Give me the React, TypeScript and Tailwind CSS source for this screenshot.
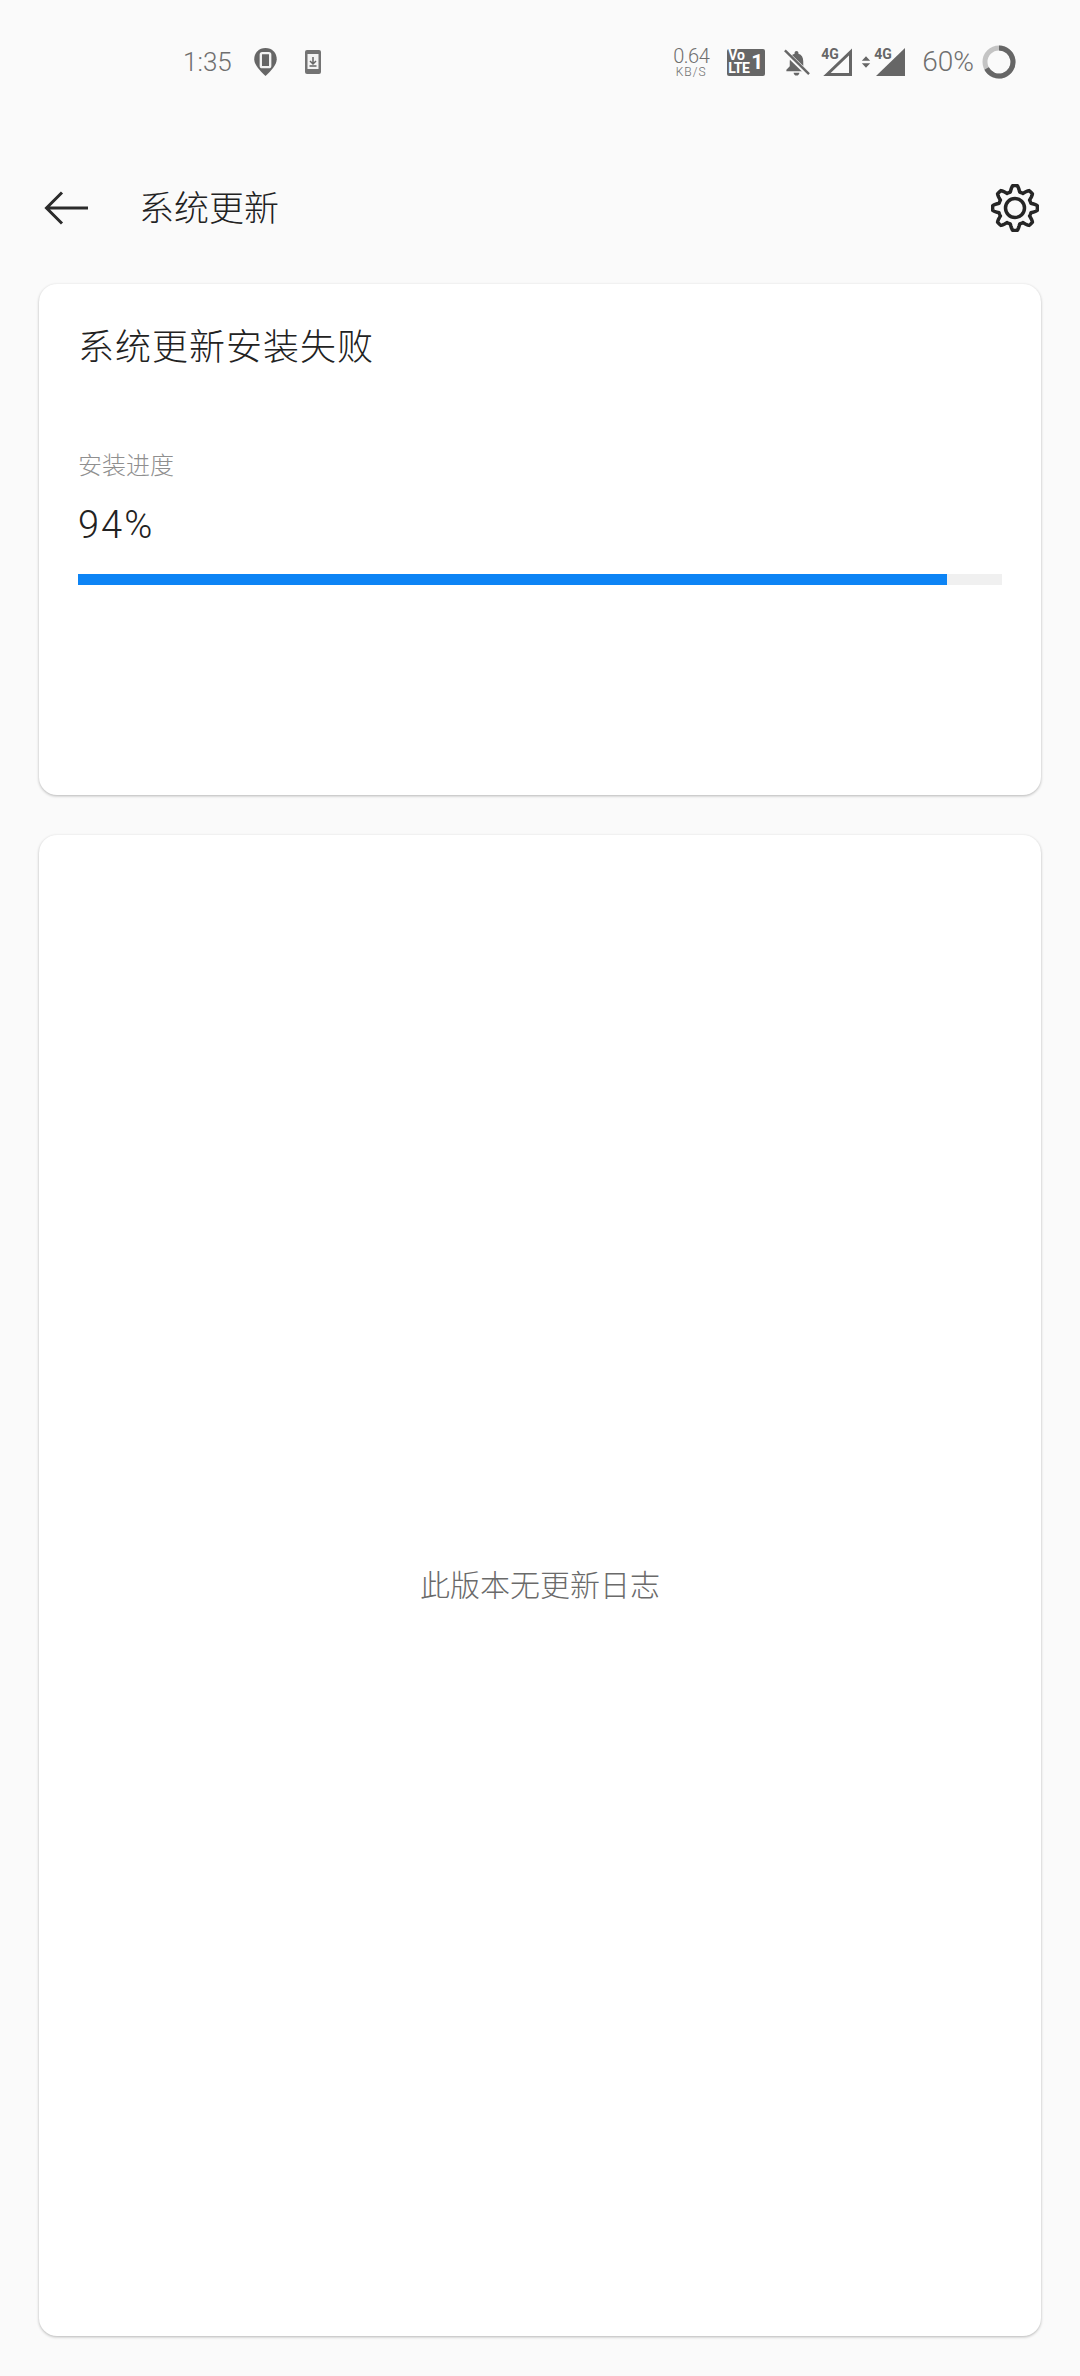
const gearPath = (() => {
  const pts: string[] = [];
  for (let i = 0; i < 240; i++) {
    const t = (i / 240) * Math.PI * 2;
    const wave = Math.max(-1, Math.min(1, 1.5 * Math.cos(8 * t)));
    const r = 19.5 + 2.9 * wave;
    pts.push(`${(24 + r * Math.sin(t)).toFixed(2)} ${(24 - r * Math.cos(t)).toFixed(2)}`);
  }
  return `M${pts.join('L')}Z`;
})();

function PinIcon() {
  return (
    <svg width="25" height="30" viewBox="0 0 26 32">
      <path d="M13 1C6 1 1 6 1 13c0 6 6 12 12 18 6-6 12-12 12-18C25 6 20 1 13 1Z" fill="#666" />
      <rect x="8" y="6.500" width="10" height="15" rx="1.500" fill="none" stroke="#f3f3f3" strokeWidth="2.500" />
    </svg>
  );
}

function PhoneDownIcon() {
  return (
    <svg width="16" height="24" viewBox="0 0 16 24">
      <rect width="16" height="24" rx="2" fill="#737373" />
      <rect x="2.500" y="4" width="11" height="15" fill="#f3f3f3" />
      <path d="M8 7v7M5 11l3 3 3-3M4.500 16h7" fill="none" stroke="#666" strokeWidth="1.500" />
    </svg>
  );
}

function VolteIcon() {
  return (
    <div className="w-[38px] h-[27px] rounded-[2px] bg-[#666] text-white font-bold flex items-center justify-between pl-[1px]" style={{ fontFamily: 'Roboto, sans-serif' }}>
      <div className="flex flex-col">
        <span className="text-[14px] leading-[13px]">Vo</span>
        <span className="text-[14px] leading-[13px] tracking-[-0.5px]">LTE</span>
      </div>
      <span className="text-[21px] leading-none mr-[2px]">1</span>
    </div>
  );
}

function MuteBellIcon() {
  return (
    <svg width="27" height="27" viewBox="0 0 28 28">
      <path d="M14 2c-1.200 0-2 .8-2 2v1C8.500 6 7 9 7 13v5l-3.500 3.500V23h21v-1.500L21 18v-5c0-4-1.500-7-5-8V4c0-1.200-.8-2-2-2Z" fill="#666" />
      <path d="M11 24.500h6c0 1.500-1.300 3-3 3s-3-1.500-3-3Z" fill="#666" />
      <path d="M2 2.500 26 26" stroke="#fafafa" strokeWidth="5" />
      <path d="M2 1.500 27 26" stroke="#666" strokeWidth="2.500" />
    </svg>
  );
}

function SignalIcon({ filled }: { filled: boolean }) {
  return (
    <div className="relative w-[29px] h-[28px]">
      <svg width="29" height="28" viewBox="0 0 29 28" className="absolute left-0 top-0">
        {filled ? (
          <path d="M0 28 29 0v28Z" fill="#666" />
        ) : (
          <path d="M4 26.500 27.500 4v22.500Z" fill="none" stroke="#666" strokeWidth="3" />
        )}
      </svg>
      <span className="absolute left-[-2px] top-[-1px] text-[14px] leading-none font-bold text-[#666]" style={{ fontFamily: 'Roboto, sans-serif' }}>4G</span>
    </div>
  );
}

export default function App() {
  return (
    <div
      className="w-[1080px] h-[2376px] bg-[#fafafa] flex flex-col overflow-hidden"
      style={{ fontFamily: '"Noto Sans CJK SC", Roboto, sans-serif' }}
    >
      {/* status bar */}
      <div className="h-[124px] shrink-0 flex items-center pl-[183px] pr-[64px] text-[#6f6f6f]">
        <span className="text-[26px] font-light" style={{ fontFamily: 'Roboto, sans-serif' }}>1:35</span>
        <div className="ml-[21px]"><PinIcon /></div>
        <div className="ml-[27px]"><PhoneDownIcon /></div>
        <div className="ml-auto flex items-center">
          <div className="flex flex-col items-center mr-[18px]" style={{ fontFamily: 'Roboto, sans-serif' }}>
            <span className="text-[20px] font-light tracking-[-0.5px] leading-[19px]">0.64</span>
            <span className="text-[12px] font-light tracking-[1px] leading-[12px]">KB/S</span>
          </div>
          <VolteIcon />
          <div className="ml-[18px]"><MuteBellIcon /></div>
          <div className="ml-[13px]"><SignalIcon filled={false} /></div>
          <svg width="10" height="14" viewBox="0 0 12 16" className="ml-[9px]">
            <path d="M6 1 11 6.500H1ZM6 15 11 9.500H1Z" fill="#666" />
          </svg>
          <div className="ml-[5px]"><SignalIcon filled /></div>
          <span className="ml-[17px] text-[28px] font-light" style={{ fontFamily: 'Roboto, sans-serif' }}>60%</span>
          <svg width="34" height="34" viewBox="0 0 34 34" className="ml-[8px]">
            <circle cx="17" cy="17" r="14" fill="none" stroke="#c4c4c4" strokeWidth="5" />
            <path d="M17 3a14 14 0 1 1-12.400 20.500" fill="none" stroke="#666" strokeWidth="5" />
          </svg>
        </div>
      </div>

      {/* title bar */}
      <div className="h-[160px] shrink-0 flex items-center pl-[44px] pr-[41px] pt-[8px]">
        <svg width="44" height="34" viewBox="0 0 44 34" fill="none" stroke="#2b2b2b" strokeWidth="3">
          <path d="M44 17H3M18 1.500 2.500 17 18 32.500" />
        </svg>
        <span className="ml-[51px] mb-[6px] text-[35px] font-light text-[#222] leading-none">系统更新</span>
        <svg width="48" height="48" viewBox="0 0 48 48" className="ml-auto" fill="none" stroke="#262626" strokeWidth="3.500">
          <path d={gearPath} strokeLinejoin="round" />
          <circle cx="24" cy="24" r="9.500" />
        </svg>
      </div>

      {/* install status card */}
      <div className="mx-[39px] h-[511px] shrink-0 bg-white rounded-[18px] shadow-[0_1px_3px_rgba(0,0,0,0.28)] px-[39px] pt-[42px]">
        <div className="text-[36px] font-light text-[#222] leading-none tracking-[1px]">系统更新安装失败</div>
        <div className="mt-[90px] text-[24px] font-light text-[#8f8f8f] leading-none">安装进度</div>
        <div className="mt-[30px] text-[38px] font-light text-[#222] leading-none tracking-[2px]" style={{ fontFamily: 'Roboto, sans-serif' }}>94%</div>
        <div className="mt-[30px] h-[11px] bg-[#f0f0f0]">
          <div className="h-full bg-[#0d84f5]" style={{ width: `${(869 / 924) * 100}%` }} />
        </div>
      </div>

      {/* changelog card */}
      <div className="mx-[39px] mt-[40px] h-[1501px] shrink-0 bg-white rounded-[18px] shadow-[0_1px_3px_rgba(0,0,0,0.28)] flex items-center justify-center">
        <span className="mb-[6px] text-[30px] font-light text-[#6a6a6a] leading-none">此版本无更新日志</span>
      </div>
    </div>
  );
}
